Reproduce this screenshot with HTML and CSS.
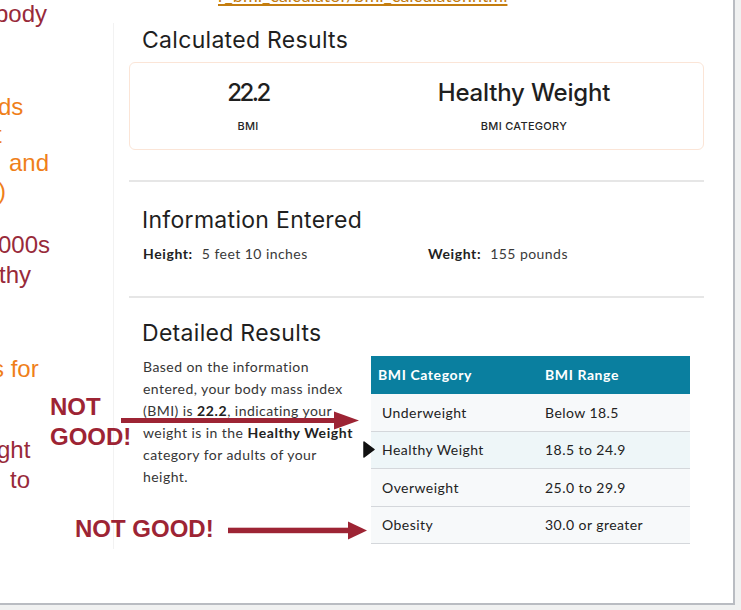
FILE: index.html
```html
<!DOCTYPE html>
<html lang="en">
<head>
<meta charset="utf-8">
<title>BMI Results</title>
<link rel="stylesheet" href="styles.css">
</head>
<body>
<div class="frame">
  <div class="side">
    <div class="blk blk-a red"><div class="ln sh5">body</div></div>
    <div class="blk blk-b orange">
      <div class="ln sh2">ds</div>
      <div class="ln sh5">t</div>
      <div class="ln pad9">and</div>
      <div class="ln sh2">)</div>
    </div>
    <div class="blk blk-c red">
      <div class="ln sh2">000s</div>
      <div class="ln sh1">thy</div>
    </div>
    <div class="blk blk-d orange"><div class="ln sh8">s for</div></div>
    <div class="blk blk-e red">
      <div class="ln sh3">ght</div>
      <div class="ln pad10">to</div>
    </div>
  </div>

  <div class="main">
    <div class="url"><a class="url-link" href="#">r_bmi_calculator/bmi_calculator.html</a></div>
    <div class="panel">
      <h2 class="title">Calculated Results</h2>
      <div class="result-card">
        <div class="stat">
          <div class="val val-num">22.2</div>
          <div class="lbl">BMI</div>
        </div>
        <div class="stat">
          <div class="val val-cat">Healthy Weight</div>
          <div class="lbl">BMI CATEGORY</div>
        </div>
      </div>
      <hr class="rule rule-1">
      <h2 class="title title-info">Information Entered</h2>
      <div class="info">
        <div><span class="info-key">Height:</span> 5 feet 10 inches</div>
        <div><span class="info-key">Weight:</span> 155 pounds</div>
      </div>
      <hr class="rule rule-2">
      <h2 class="title title-detail">Detailed Results</h2>
      <div class="detail">
        <p class="detail-text">Based on the information<br>entered, your body mass index<br>(BMI) is <b>22.2</b>, indicating your<br>weight is in the <b>Healthy Weight</b><br>category for adults of your<br>height.</p>
        <table class="bmi">
          <thead>
            <tr><th>BMI Category</th><th>BMI Range</th></tr>
          </thead>
          <tbody>
            <tr><td>Underweight</td><td>Below 18.5</td></tr>
            <tr class="hl"><td>Healthy Weight</td><td>18.5 to 24.9</td></tr>
            <tr><td>Overweight</td><td>25.0 to 29.9</td></tr>
            <tr><td>Obesity</td><td>30.0 or greater</td></tr>
          </tbody>
        </table>
      </div>
    </div>
  </div>

  <div class="note note-1">NOT<br>GOOD!</div>
  <div class="note note-2">NOT GOOD!</div>
  <svg class="arrow arrow-1" width="239" height="24" viewBox="0 0 239 24">
    <rect x="0" y="9" width="216" height="5" fill="#9d2434"/>
    <polygon points="213,2.5 238,11.5 213,20.5" fill="#9d2434"/>
  </svg>
  <svg class="arrow arrow-2" width="140" height="24" viewBox="0 0 140 24">
    <rect x="0" y="8.7" width="123" height="5.5" fill="#9d2434"/>
    <polygon points="120,2.5 139,11.5 120,20.5" fill="#9d2434"/>
  </svg>
  <svg class="marker" width="12" height="17" viewBox="0 0 12 17">
    <polygon points="1,1 11,8.5 1,16" fill="#111" stroke="#111" stroke-width="1.5" stroke-linejoin="round"/>
  </svg>
</div>
</body>
</html>
```

FILE: styles.css
```css
* { box-sizing: content-box; }

body {
  margin: 0;
  background: #f0f1f1;
}

.frame {
  position: relative;
  width: 733px;
  height: 603px;
  background: #fff;
  border-right: 2px solid #b9bcc2;
  border-bottom: 2px solid #b9bcc2;
  display: flex;
  overflow: hidden;
}

/* left cropped column */
.side {
  flex: none;
  width: 113px;
  overflow: hidden;
  font-family: "Liberation Sans", Arial, sans-serif;
  font-size: 24px;
  white-space: nowrap;
}
.red { color: #982a3a; }
.orange { color: #ef7f1a; }
.blk-a { line-height: 28px; }
.blk-b { line-height: 28px; margin-top: 64.5px; }
.blk-c { line-height: 30px; margin-top: 25px; }
.blk-d { line-height: 30px; margin-top: 64px; }
.blk-e { line-height: 30px; margin-top: 51px; }
.sh1 { margin-left: -1px; }
.sh2 { margin-left: -2px; }
.sh3 { margin-left: -3px; }
.sh5 { margin-left: -5px; }
.sh8 { margin-left: -8px; }
.pad9 { padding-left: 9px; }
.pad10 { padding-left: 10px; }

/* main column */
.main {
  flex: none;
  width: 620px;
}

.url {
  height: 23px;
  overflow: hidden;
  padding-left: 105px;
}
.url-link {
  display: block;
  width: max-content;
  margin-top: -15.5px;
  font-family: Lato, sans-serif;
  font-size: 18px;
  line-height: 20px;
  color: #c47d10;
  text-decoration: underline;
  text-decoration-thickness: 1.5px;
  text-underline-offset: 2px;
}

.panel {
  width: 575px;
  border-left: 1px solid #f2f2f2;
  padding: 3px 0 5px 15px;
}

.title {
  margin: 0;
  padding-left: 13px;
  font-family: Inter, sans-serif;
  font-weight: 400;
  font-size: 23px;
  line-height: 28px;
  letter-spacing: 0.3px;
  color: #1f1f1f;
}
.title-info { margin-top: 24px; }
.title-detail { margin-top: 21.3px; }

.result-card {
  margin-top: 8px;
  border: 1px solid #fbe5d7;
  border-radius: 6px;
  padding: 15px 0 16px;
  display: grid;
  grid-template-columns: 236px 316px;
  font-family: Inter, sans-serif;
  color: #1f1f1f;
  text-align: center;
}
.val {
  font-size: 24px;
  font-weight: 500;
  line-height: 30px;
}
.val-num { letter-spacing: -2.5px; }
.val-cat { letter-spacing: -0.2px; }
.lbl {
  margin-top: 11px;
  font-size: 11px;
  font-weight: 500;
  line-height: 14px;
  letter-spacing: 0.3px;
  color: #262626;
}

.rule {
  margin: 0;
  border: 0;
  height: 2px;
  background: #e6e6e6;
}
.rule-1 { margin-top: 30px; }
.rule-2 { margin-top: 31.4px; }

.info {
  margin-top: 8.6px;
  padding-left: 14px;
  display: grid;
  grid-template-columns: 285px 1fr;
  font-family: Lato, sans-serif;
  font-size: 14px;
  line-height: 22px;
  letter-spacing: 0.45px;
  color: #3a3a3a;
}
.info-key {
  font-weight: 700;
  letter-spacing: 0.6px;
  color: #222;
  margin-right: 5px;
}

.detail {
  margin-top: 9px;
  padding-left: 14px;
  display: flex;
  align-items: flex-start;
}
.detail-text {
  margin: 0;
  width: 216px;
  flex: none;
  white-space: nowrap;
  font-family: Lato, sans-serif;
  font-size: 14px;
  line-height: 22px;
  letter-spacing: 0.45px;
  color: #363636;
}
.detail-text b { color: #222; letter-spacing: 0.6px; }

.bmi {
  flex: none;
  margin-left: 12px;
  width: 319px;
  border-collapse: collapse;
  font-family: Lato, sans-serif;
  font-size: 14px;
  line-height: 22px;
  letter-spacing: 0.45px;
  color: #222;
}
.bmi th {
  background: #0a7f9f;
  color: #fff;
  font-weight: 700;
  letter-spacing: 0.6px;
  text-align: left;
  padding: 8px 0 8px 7px;
}
.bmi th:first-child { width: 160px; }
.bmi td {
  padding: 7.25px 0 7.25px 7px;
  border-bottom: 1px solid #d4d7db;
  background: #f7f9fa;
}
.bmi td:first-child { padding-left: 11px; }
.bmi tr.hl td { background: #eef6f8; }

/* annotations overlay */
.note {
  position: absolute;
  font-family: "Liberation Sans", Arial, sans-serif;
  font-weight: 700;
  font-size: 24px;
  line-height: 30px;
  color: #9d2434;
  white-space: nowrap;
}
.note-1 { left: 50px; top: 392px; }
.note-2 { left: 75px; top: 514px; }

.arrow { position: absolute; }
.arrow-1 { left: 121px; top: 409px; }
.arrow-2 { left: 228px; top: 519px; }

.marker {
  position: absolute;
  left: 363px;
  top: 441px;
}
```
